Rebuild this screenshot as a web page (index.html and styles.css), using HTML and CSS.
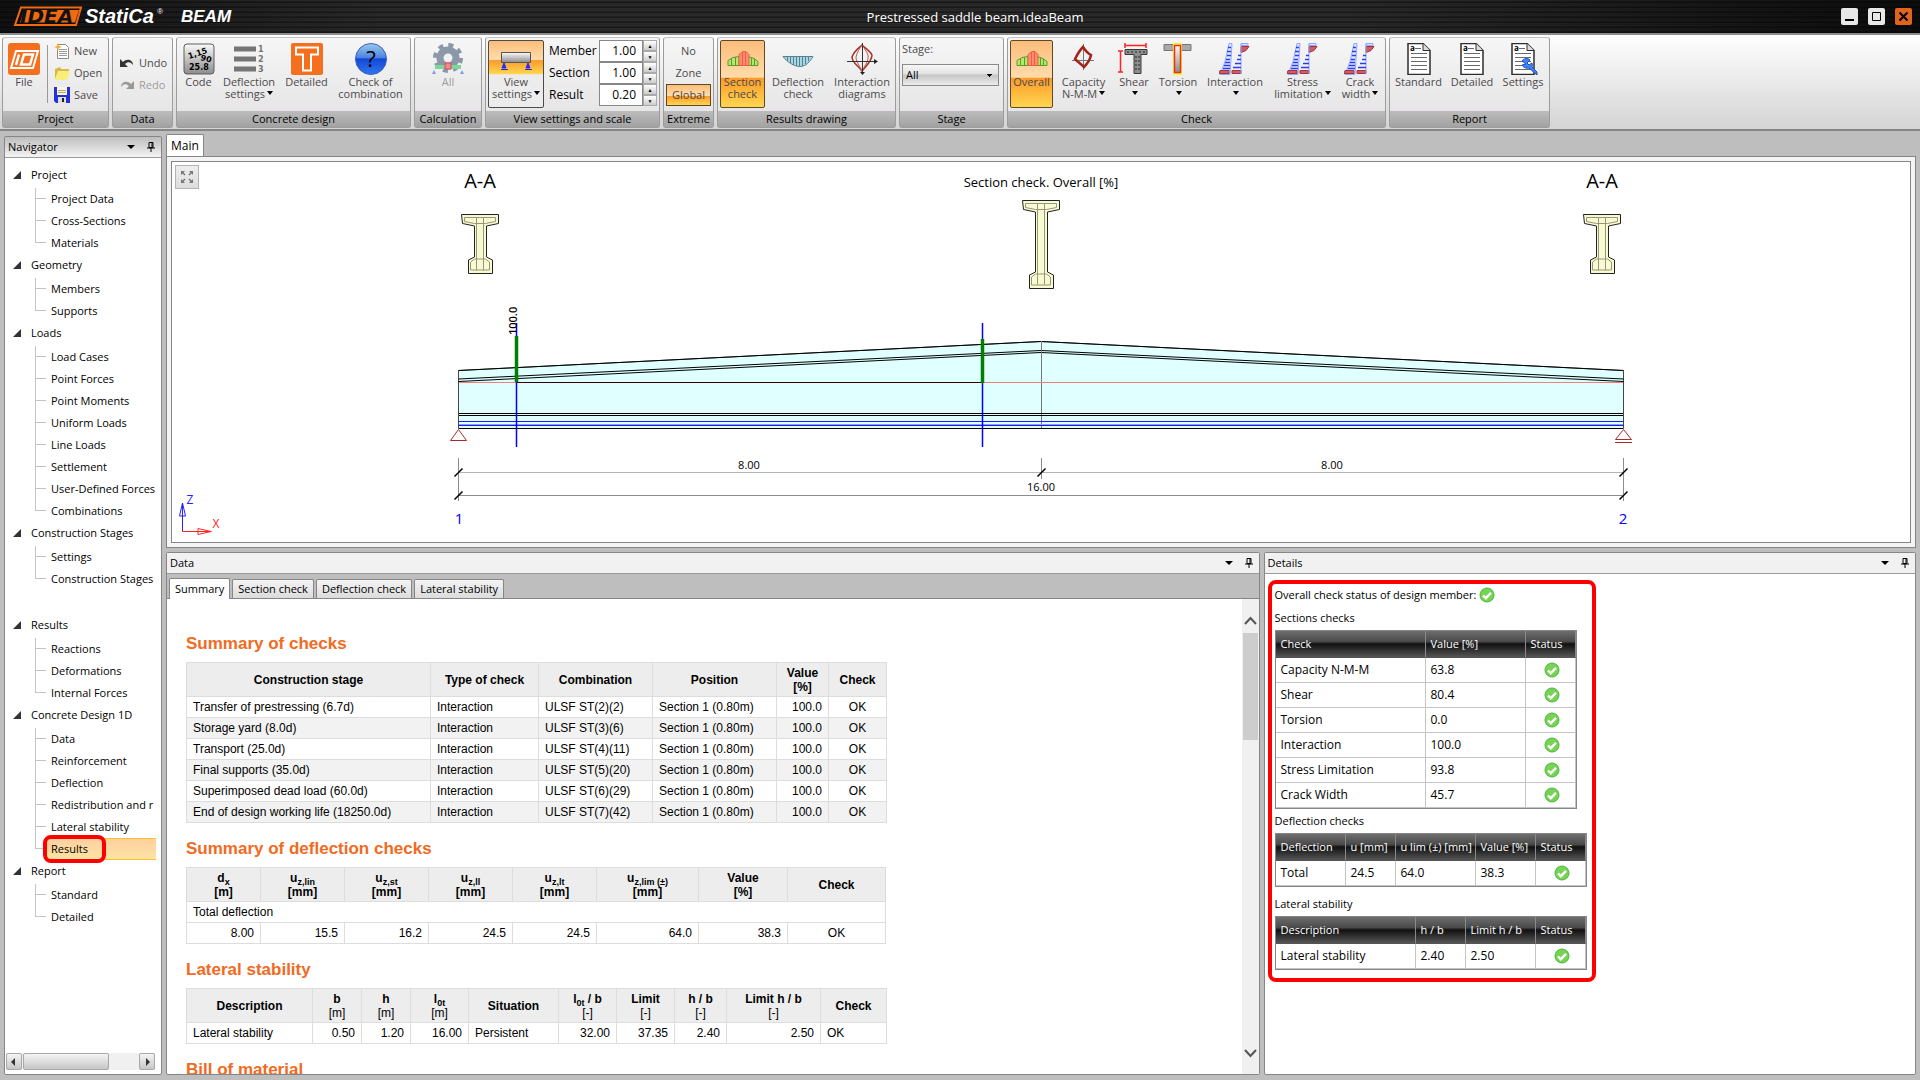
FILE: index.html
```html
<!DOCTYPE html>
<html lang="en">

<head>
    <meta charset="UTF-8">
    <meta name="viewport" content="width=device-width, initial-scale=1.0">
    <title>Prestressed saddle beam.ideaBeam</title>
    <link rel="stylesheet" href="styles.css">
</head>

<body>
    <!-- shared icons -->
    <svg class="defs" width="0" height="0">
        <defs>
            <linearGradient id="steel" x1="0" y1="0" x2="0" y2="1">
                <stop offset="0" stop-color="#fafafa" />
                <stop offset="1" stop-color="#8c8c8c" />
            </linearGradient>
            <linearGradient id="blueball" x1="0" y1="0" x2="0" y2="1">
                <stop offset="0" stop-color="#9ccbee" />
                <stop offset="0.45" stop-color="#4c86e0" />
                <stop offset="0.5" stop-color="#1546d4" />
                <stop offset="1" stop-color="#2f78f2" />
            </linearGradient>
        </defs>
        <symbol id="i-ok" viewBox="0 0 16 16">
            <circle cx="8" cy="8" r="7" fill="#77d353" stroke="#4db53c" />
            <path d="M4 8.500l2.800 2.700 5.200-5.400" fill="none" stroke="#fff" stroke-width="2.400" />
        </symbol>
        <symbol id="i-pin" viewBox="0 0 8 10">
            <path d="M2 .5h4v5H2zM0 6h8M4 6v4M5 1v5" fill="none" stroke="#000" />
        </symbol>
        <symbol id="i-overall" viewBox="0 0 32 32">
            <path d="M1 22.500v-5l5-3 6-1v9zM21 22.500v-9l6 2 4 3v4z" fill="#b5e86a" stroke="#5d9a2c" />
            <path d="M4.500 16v6M8.500 14v8M24.500 15v7M27.500 16v6" stroke="#5d9a2c" />
            <path d="M12 22.500v-11l4-3h3l3 3v11z" fill="#ff8d6c" stroke="#e8604a" />
            <path d="M15.500 9v13M18.500 9v13" stroke="#e8604a" />
        </symbol>
        <symbol id="i-stress" viewBox="0 0 32 32">
            <path d="M10 .5h3L11 31.500H1l5-13z" fill="#dfe6ff" stroke="#8ea6ff" />
            <path d="M9 4.500h3M8 8.500h4M8 12.500h4M7 16.500h4M6 19.500h5M5 22.500h6M4 25.500h7" stroke="#2a3df0" stroke-width="1.500" />
            <path d="M1 27.500h9v3H0zM13 27.500h9v3h-9zM22 3.500h8l-3 4-5 2z" fill="#c85f68" stroke="#a83340" />
            <path d="M22 .5h7v2h-7zM22 1v30" fill="#dfe6ff" stroke="#8ea6ff" />
            <path d="M19 12.500h3M18 16.500h4M16 20.500h6M14 24.500h8" stroke="#2a3df0" stroke-width="1.500" />
        </symbol>
        <symbol id="i-report" viewBox="0 0 32 32">
            <path d="M5 .5h15l7 7v24H5z" fill="#fff" stroke="#2e2e2e" stroke-width="1.500" />
            <path d="M20 .5v7h7" fill="#ddd" stroke="#2e2e2e" />
            <path d="M12 5.500h6M8 10.500h16M8 14.500h16M8 18.500h16M8 22.500h16M8 26.500h16" stroke="#6a6a6a" />
        </symbol>
    </svg>

    <header class="titlebar">
        <div class="brand">
            <svg class="logo" width="240" height="33">
                <path d="M21 7.500h60l-5 17.500H15z" fill="#0b0b0b" stroke="#f26a0f" stroke-width="2" />
                <path d="M24 10h55l-4 12.500H20z" fill="#f26a0f" />
                <text class="logo-idea" x="20" y="23">IDEA</text>
                <text class="logo-statica" x="85" y="23">StatiCa</text>
                <text class="logo-reg" x="157" y="14">®</text>
                <text class="logo-beam" x="181" y="22">BEAM</text>
            </svg>
        </div>
        <h1 class="title">Prestressed saddle beam.ideaBeam</h1>
        <div class="window-buttons">
            <button class="win" aria-label="Minimize"><svg width="17" height="17"><path d="M4 12h9" stroke="#000" stroke-width="2" /></svg></button>
            <button class="win" aria-label="Maximize"><svg width="17" height="17"><path d="M4.500 4.500h8v8h-8z" fill="none" stroke="#000" /></svg></button>
            <button class="win close" aria-label="Close"><svg width="17" height="17"><path d="M4.500 4.500l8 8M12.500 4.500l-8 8" stroke="#000" stroke-width="2" /></svg></button>
        </div>
    </header>

    <div class="ribbon">
        <section class="group">
            <div class="tools">
                <button class="tool w-file">
                    <svg width="32" height="32"><rect width="32" height="32" rx="3" fill="#f5701e" /><path d="M8 8h22l-5 17H3z" fill="none" stroke="#fff" stroke-width="2" /><path d="M11 11.500L8 22M16 11.500h9l-3 10h-9z" fill="none" stroke="#fff" stroke-width="2.500" /></svg>
                    <span>File</span>
                </button>
                <div class="divider"></div>
                <div class="stack">
                    <button class="small"><svg width="16" height="16"><path d="M3.500 1.500h8l3 3v11h-11z" fill="#fff" stroke="#8a8a8a" /><path d="M5 6.500h8M5 8.500h8M5 10.500h8M5 12.500h8" stroke="#9a9a9a" /><path d="M4 0l1 3 3 1-3 1-1 3-1-3-3-1 3-1z" fill="#f9ac3b" /></svg>New</button>
                    <button class="small"><svg width="16" height="16"><path d="M1 4l5-2 1 2h8v3H4l-3 7z" fill="#d9b84a" /><path d="M4 6h12l-3 9H1z" fill="#f8ee7a" /></svg>Open</button>
                    <button class="small"><svg width="16" height="16"><path d="M0 0h16v16H2l-2-2z" fill="#2430d8" /><path d="M3 0h10v8H3z" fill="#fbf6df" /><path d="M4 3.500h8M4 5.500h8" stroke="#b7a96e" /><path d="M4 10h8v6H4z" fill="#ddd" /><path d="M8 11h2v4H8z" fill="#222" /></svg>Save</button>
                </div>
            </div>
            <h2>Project</h2>
        </section>
        <section class="group">
            <div class="tools w-data">
                <div class="stack middle">
                    <button class="small"><svg width="16" height="16"><path d="M1 4v8h8l-3-3c3-3 6-2 8 1 0-5-6-7-10-3z" fill="#333" /></svg>Undo</button>
                    <button class="small off"><svg width="16" height="16"><path d="M15 4v8H7l3-3C7 6 4 7 2 10 2 5 8 3 12 7z" fill="#999" /></svg>Redo</button>
                </div>
            </div>
            <h2>Data</h2>
        </section>
        <section class="group">
            <div class="tools">
                <button class="tool w-code">
                    <svg width="32" height="32" class="code-icon"><rect x="1" y="1" width="30" height="30" rx="3" fill="url(#steel)" stroke="#5c5c5c" /><text x="6" y="16" transform="rotate(-18 6 16)">1,15</text><text x="17" y="17" transform="rotate(14 17 17)">90</text><text x="6" y="27">25.8</text></svg>
                    <span>Code</span>
                </button>
                <button class="tool w-deflection">
                    <svg width="32" height="32" class="lines-icon"><path d="M1 6h22M1 16h22M1 26h22" stroke="#757575" stroke-width="5" /><text x="25" y="9">1</text><text x="25" y="19">2</text><text x="25" y="29">3</text></svg>
                    <span>Deflection<br>settings<i class="caret"></i></span>
                </button>
                <button class="tool w-detailed">
                    <svg width="32" height="32"><rect width="32" height="32" rx="2" fill="#f5701e" /><path d="M5 4.500h22v7h-7v16h-8v-16H5z" fill="none" stroke="#fff" stroke-width="2" /></svg>
                    <span>Detailed</span>
                </button>
                <button class="tool w-combination">
                    <svg width="32" height="32" class="help-icon"><circle cx="16" cy="16" r="15.500" fill="url(#blueball)" stroke="#3a5fc0" /><text x="16" y="24" text-anchor="middle">?</text></svg>
                    <span>Check of<br>combination</span>
                </button>
            </div>
            <h2>Concrete design</h2>
        </section>
        <section class="group">
            <div class="tools">
                <button class="tool off w-all">
                    <svg width="32" height="32"><circle cx="16" cy="15" r="8" fill="none" stroke="#8c97a8" stroke-width="7" /><circle cx="16" cy="15" r="13" fill="none" stroke="#8c97a8" stroke-width="4" stroke-dasharray="5 5.200" /><path d="M3 24h26" stroke="#79d79a" stroke-width="4" /><path d="M13 20h6v6h-6z" fill="#f08a8a" stroke="#d46" /><path d="M2 27l-2 4h4zM30 27l-2 4h4z" fill="#8f95f0" /></svg>
                    <span>All</span>
                </button>
            </div>
            <h2>Calculation</h2>
        </section>
        <section class="group">
            <div class="tools">
                <button class="tool w-view half-pressed">
                    <svg width="32" height="32"><path d="M1.500 9.500h29v10h-29z" fill="url(#steel)" stroke="#555" /><path d="M4 20l-2 5h4zM28 20l-2 5h4zM1 26.500h7M25 26.500h7" fill="#2a2af0" stroke="#2a2af0" /></svg>
                    <span>View<br>settings<i class="caret"></i></span>
                </button>
                <div class="scales">
                    <label for="member">Member</label>
                    <div class="spin"><input id="member" type="text" value="1.00"><div class="updown"><button aria-label="Increase member">▲</button><button aria-label="Decrease member">▼</button></div></div>
                    <label for="section">Section</label>
                    <div class="spin"><input id="section" type="text" value="1.00"><div class="updown"><button aria-label="Increase section">▲</button><button aria-label="Decrease section">▼</button></div></div>
                    <label for="result">Result</label>
                    <div class="spin"><input id="result" type="text" value="0.20"><div class="updown"><button aria-label="Increase result">▲</button><button aria-label="Decrease result">▼</button></div></div>
                </div>
            </div>
            <h2>View settings and scale</h2>
        </section>
        <section class="group">
            <div class="tools">
                <div class="stack extreme">
                    <button class="small">No</button>
                    <button class="small">Zone</button>
                    <button class="small pressed">Global</button>
                </div>
            </div>
            <h2>Extreme</h2>
        </section>
        <section class="group">
            <div class="tools">
                <button class="tool w-section pressed"><svg width="32" height="32"><use href="#i-overall" /></svg><span>Section<br>check</span></button>
                <button class="tool w-dcheck">
                    <svg width="32" height="32"><path d="M1 13.500h30c-3 5-7 10-13 10S5 19 1 13.500z" fill="#a5d7e6" stroke="#5b7f8c" /><path d="M5.500 14v4M8.500 14v6M11.500 14v8M14.500 14v9M17.500 14v9M20.500 14v9M23.500 14v7M26.500 14v4" stroke="#5b7f8c" /></svg>
                    <span>Deflection<br>check</span>
                </button>
                <button class="tool w-diagrams">
                    <svg width="32" height="32"><path d="M16 2c3 3 8 6 10 10 0 6-5 10-10 16C12 22 6 20 6 14c2-6 7-9 10-12z" fill="none" stroke="#a53028" stroke-width="1.500" /><path d="M16 2c2 3 5 7 6 10 1 6-3 10-6 16-3-6-6-10-6-14 1-5 4-9 6-12z" fill="none" stroke="#c0584e" /><path d="M16.500 0v31M1 18.500h30" stroke="#333" /><path d="M28 16l4 2.500-4 2.500zM14 29h5l-2.500 3z" fill="#222" /></svg>
                    <span>Interaction<br>diagrams</span>
                </button>
            </div>
            <h2>Results drawing</h2>
        </section>
        <section class="group">
            <div class="tools w-stage">
                <div class="stage">
                    <label for="stage">Stage:</label>
                    <select id="stage"><option>All</option></select>
                </div>
            </div>
            <h2>Stage</h2>
        </section>
        <section class="group">
            <div class="tools">
                <button class="tool w-overall pressed"><svg width="32" height="32"><use href="#i-overall" /></svg><span>Overall</span></button>
                <button class="tool w-capacity">
                    <svg width="32" height="32"><path d="M15.500 1v26M4 17.500h22" stroke="#777" /><path d="M15 4c2 3 4 6 8 8-1 5-3 8-7 12-3-3-6-5-9-8 2-4 4-8 8-12z" fill="none" stroke="#a5231a" stroke-width="2.500" /></svg>
                    <span>Capacity<br>N-M-M<i class="caret"></i></span>
                </button>
                <button class="tool w-shear">
                    <svg width="32" height="32"><path d="M7 6.500h22v5h-6v19h-7v-19H7z" fill="#8e8e8e" stroke="#3c3c3c" /><path d="M9 9h18M18 13v15M21 13v15" stroke="#222" stroke-dasharray="2 2" /><path d="M7 2.500h21M2.500 8v21M7 0v5M28 0v5M0 8h5M0 29h5" stroke="#f22" stroke-width="1.500" /></svg>
                    <span>Shear<br><i class="caret"></i></span>
                </button>
                <button class="tool w-torsion">
                    <svg width="32" height="32"><path d="M2 1.500h27v6H2z" fill="#a9a9a9" stroke="#777" /><path d="M11 0h9v32h-9z" fill="#ffee3c" /><path d="M12.500 2.500h6v27h-6z" fill="url(#steel)" stroke="#f03010" stroke-width="1.500" /></svg>
                    <span>Torsion<br><i class="caret"></i></span>
                </button>
                <button class="tool w-interaction"><svg width="32" height="32"><use href="#i-stress" /></svg><span>Interaction<br><i class="caret"></i></span></button>
                <button class="tool w-stress"><svg width="32" height="32"><use href="#i-stress" /></svg><span>Stress<br>limitation<i class="caret"></i></span></button>
                <button class="tool w-crack"><svg width="32" height="32"><use href="#i-stress" /></svg><span>Crack<br>width<i class="caret"></i></span></button>
            </div>
            <h2>Check</h2>
        </section>
        <section class="group">
            <div class="tools">
                <button class="tool w-standard"><svg class="page-icon" width="32" height="32"><use href="#i-report" /><text x="7" y="8">a</text></svg><span>Standard</span></button>
                <button class="tool w-report"><svg class="page-icon" width="32" height="32"><use href="#i-report" /><text x="7" y="8">a</text></svg><span>Detailed</span></button>
                <button class="tool w-settings"><svg class="page-icon" width="32" height="32"><use href="#i-report" /><text x="7" y="8">a</text><path d="M15 18c2-3 6-3 8-1l-3 3 2 2 3-2c1 2 0 3 0 4l5 5v3l-8-7c-3 1-6-1-7-3l4-1z" fill="#3f83ff" stroke="#1c50b8" /></svg><span>Settings</span></button>
            </div>
            <h2>Report</h2>
        </section>
    </div>

    <main class="workspace">
        <aside class="panel navigator">
            <div class="panel-head shaded"><span>Navigator</span><i class="caret"></i><svg width="8" height="10"><use href="#i-pin" /></svg></div>
            <nav class="tree">
                <h3>Project</h3>
                <ul>
                    <li><a href="#">Project Data</a></li>
                    <li><a href="#">Cross-Sections</a></li>
                    <li><a href="#">Materials</a></li>
                </ul>
                <h3>Geometry</h3>
                <ul>
                    <li><a href="#">Members</a></li>
                    <li><a href="#">Supports</a></li>
                </ul>
                <h3>Loads</h3>
                <ul>
                    <li><a href="#">Load Cases</a></li>
                    <li><a href="#">Point Forces</a></li>
                    <li><a href="#">Point Moments</a></li>
                    <li><a href="#">Uniform Loads</a></li>
                    <li><a href="#">Line Loads</a></li>
                    <li><a href="#">Settlement</a></li>
                    <li><a href="#">User-Defined Forces</a></li>
                    <li><a href="#">Combinations</a></li>
                </ul>
                <h3>Construction Stages</h3>
                <ul class="spaced">
                    <li><a href="#">Settings</a></li>
                    <li><a href="#">Construction Stages</a></li>
                </ul>
                <h3>Results</h3>
                <ul>
                    <li><a href="#">Reactions</a></li>
                    <li><a href="#">Deformations</a></li>
                    <li><a href="#">Internal Forces</a></li>
                </ul>
                <h3>Concrete Design 1D</h3>
                <ul>
                    <li><a href="#">Data</a></li>
                    <li><a href="#">Reinforcement</a></li>
                    <li><a href="#">Deflection</a></li>
                    <li><a href="#">Redistribution and r</a></li>
                    <li><a href="#">Lateral stability</a></li>
                    <li class="selected"><a href="#">Results</a></li>
                </ul>
                <h3>Report</h3>
                <ul>
                    <li><a href="#">Standard</a></li>
                    <li><a href="#">Detailed</a></li>
                </ul>
            </nav>
            <div class="hscroll">
                <button aria-label="Scroll left"><svg width="14" height="14"><path d="M8 3v8L4 7z" fill="#333" /></svg></button>
                <div class="hthumb"></div>
                <button aria-label="Scroll right"><svg width="14" height="14"><path d="M6 3v8l4-4z" fill="#333" /></svg></button>
            </div>
        </aside>

        <div class="right">
            <div class="main-tabs"><button class="main-tab">Main</button></div>
            <section class="canvas">
                <button class="fit" aria-label="Zoom to fit"><svg width="22" height="22"><path d="M6 6l3 3M16 6l-3 3M6 16l3-3M16 16l-3-3" stroke="#777" stroke-width="1.500" /><path d="M5 5h4l-4 4zM17 5v4l-4-4zM5 17v-4l4 4zM17 17h-4l4-4z" fill="#777" /></svg></button>
                <svg class="drawing" height="380" viewBox="172 162 1738 380">
                    <defs>
                        <g id="sec-end" stroke="#222">
                            <path d="M-18.500 .5h37v9l-12 2.500v31l6 3v13.500h-24v-13.500l6-3v-31l-12-2.500z" fill="#fafad2" />
                            <path d="M-15.500 3.500h31v4l-10 2h-11l-10-2zM-3.500 3.500v53M3.500 3.500v53M-9.500 48l4-3h11l4 3v8h-19z" fill="none" stroke="#96967c" />
                        </g>
                        <g id="sec-mid" stroke="#222">
                            <path d="M-18.500 .5h37v9l-12 2.500v60l6 3v13.500h-24v-13.500l6-3v-60l-12-2.500z" fill="#fafad2" />
                            <path d="M-15.500 3.500h31v4l-10 2h-11l-10-2zM-3.500 3.500v81M3.500 3.500v81M-9.500 77l4-3h11l4 3v8h-19z" fill="none" stroke="#96967c" />
                        </g>
                    </defs>
                    <text class="t-big" x="480" y="188">A-A</text>
                    <text class="t-title" x="1041" y="187">Section check. Overall [%]</text>
                    <text class="t-big" x="1602" y="188">A-A</text>
                    <use href="#sec-end" x="480" y="214" />
                    <use href="#sec-mid" x="1041" y="200" />
                    <use href="#sec-end" x="1602" y="214" />

                    <!-- beam -->
                    <path d="M458.500 370.500L1041 341.500l582.500 29v58h-1165z" fill="#e0ffff" stroke="#444" />
                    <path d="M458.500 370.500L1041 341.500l582.500 29" fill="none" stroke="#000" />
                    <path d="M458.500 379L1041 350.500l582.500 28.500M458.500 381.500L1041 352.500l582.500 29" fill="none" stroke="#000" />
                    <path d="M1041.500 341v87" stroke="#777" />
                    <path d="M459 382.500h1164" stroke="#f08080" />
                    <path d="M517 382.500h466" stroke="#300" />
                    <path d="M459 413.500h1164M459 415.500h1164M459 428.500h1164" stroke="#000" />
                    <path d="M459 421.500h1164M459 425.500h1164" stroke="#1a1aff" />
                    <path d="M459 424.500h1164" stroke="#8f9cff" />
                    <path d="M516.500 323v124M982.500 323v124" stroke="#00f" stroke-width="1.500" />
                    <path d="M516.500 336v46M982.500 339v44" stroke="#008000" stroke-width="3.500" />
                    <path d="M458.500 429.500l8 11h-16zM1623.500 429.500l8 10h-16zM1615 442.500h17" fill="none" stroke="#a52a2a" />
                    <text class="t-val" transform="translate(517 335) rotate(-90)">100.0</text>

                    <!-- dimensions -->
                    <path d="M458.500 458v43M1041.500 458v21M1623.500 458v43M458 495.500h1166" stroke="#8c8c8c" />
                    <path d="M458 472.500h1166" stroke="#b4b4b4" />
                    <path d="M454.500 476.500l8-8M454.500 499.500l8-8M1037.500 476.500l8-8M1619.500 476.500l8-8M1619.500 499.500l8-8" stroke="#000" stroke-width="1.500" />
                    <text class="t-dim" x="749" y="469">8.00</text>
                    <text class="t-dim" x="1332" y="469">8.00</text>
                    <text class="t-dim" x="1041" y="491">16.00</text>
                    <text class="t-node" x="459" y="524">1</text>
                    <text class="t-node" x="1623" y="524">2</text>

                    <!-- axes -->
                    <path d="M182.500 531.500V503M179.500 516l3-13 3 13z" fill="none" stroke="#22f" />
                    <path d="M182.500 531.500h29M198 528.500l13 3-13 3z" fill="none" stroke="#f22" />
                    <text class="t-axis z" x="190" y="504">Z</text>
                    <text class="t-axis x" x="216" y="528">X</text>
                </svg>
            </section>

            <div class="bottom">
                <section class="panel data">
                    <div class="panel-head"><span>Data</span><i class="caret"></i><svg width="8" height="10"><use href="#i-pin" /></svg></div>
                    <div class="tabs">
                        <button class="tab active">Summary</button>
                        <button class="tab">Section check</button>
                        <button class="tab">Deflection check</button>
                        <button class="tab">Lateral stability</button>
                    </div>
                    <div class="data-body">
                        <div class="report">
                            <h2>Summary of checks</h2>
                            <table>
                                <colgroup><col class="c-244"><col class="c-108"><col class="c-114"><col class="c-124"><col class="c-52"><col class="c-58"></colgroup>
                                <tr><th>Construction stage</th><th>Type of check</th><th>Combination</th><th>Position</th><th>Value<br>[%]</th><th>Check</th></tr>
                                <tr><td>Transfer of prestressing (6.7d)</td><td>Interaction</td><td>ULSF ST(2)(2)</td><td>Section 1 (0.80m)</td><td class="num">100.0</td><td class="mid">OK</td></tr>
                                <tr class="alt"><td>Storage yard (8.0d)</td><td>Interaction</td><td>ULSF ST(3)(6)</td><td>Section 1 (0.80m)</td><td class="num">100.0</td><td class="mid">OK</td></tr>
                                <tr><td>Transport (25.0d)</td><td>Interaction</td><td>ULSF ST(4)(11)</td><td>Section 1 (0.80m)</td><td class="num">100.0</td><td class="mid">OK</td></tr>
                                <tr class="alt"><td>Final supports (35.0d)</td><td>Interaction</td><td>ULSF ST(5)(20)</td><td>Section 1 (0.80m)</td><td class="num">100.0</td><td class="mid">OK</td></tr>
                                <tr><td>Superimposed dead load (60.0d)</td><td>Interaction</td><td>ULSF ST(6)(29)</td><td>Section 1 (0.80m)</td><td class="num">100.0</td><td class="mid">OK</td></tr>
                                <tr class="alt"><td>End of design working life (18250.0d)</td><td>Interaction</td><td>ULSF ST(7)(42)</td><td>Section 1 (0.80m)</td><td class="num">100.0</td><td class="mid">OK</td></tr>
                            </table>
                            <h2>Summary of deflection checks</h2>
                            <table>
                                <colgroup><col class="c-74"><col class="c-84"><col class="c-84"><col class="c-84"><col class="c-84"><col class="c-102"><col class="c-89"><col class="c-98"></colgroup>
                                <tr><th>d<sub>x</sub><br>[m]</th><th>u<sub>z,lin</sub><br>[mm]</th><th>u<sub>z,st</sub><br>[mm]</th><th>u<sub>z,ll</sub><br>[mm]</th><th>u<sub>z,lt</sub><br>[mm]</th><th>u<sub>z,lim (±)</sub><br>[mm]</th><th>Value<br>[%]</th><th>Check</th></tr>
                                <tr><td colspan="8">Total deflection</td></tr>
                                <tr class="num"><td>8.00</td><td>15.5</td><td>16.2</td><td>24.5</td><td>24.5</td><td>64.0</td><td>38.3</td><td class="mid">OK</td></tr>
                            </table>
                            <h2>Lateral stability</h2>
                            <table>
                                <colgroup><col class="c-126"><col class="c-49"><col class="c-49"><col class="c-58"><col class="c-90"><col class="c-58"><col class="c-58"><col class="c-52"><col class="c-94"><col class="c-66"></colgroup>
                                <tr><th>Description</th><th>b<br><small>[m]</small></th><th>h<br><small>[m]</small></th><th>l<sub>0t</sub><br><small>[m]</small></th><th>Situation</th><th>l<sub>0t</sub> / b<br><small>[-]</small></th><th>Limit<br><small>[-]</small></th><th>h / b<br><small>[-]</small></th><th>Limit h / b<br><small>[-]</small></th><th>Check</th></tr>
                                <tr><td>Lateral stability</td><td class="num">0.50</td><td class="num">1.20</td><td class="num">16.00</td><td>Persistent</td><td class="num">32.00</td><td class="num">37.35</td><td class="num">2.40</td><td class="num">2.50</td><td>OK</td></tr>
                            </table>
                            <h2>Bill of material</h2>
                        </div>
                        <div class="vscroll">
                            <button aria-label="Scroll up"><svg width="15" height="14"><path d="M2 11l5.500-6 5.500 6" fill="none" stroke="#555" stroke-width="2" /></svg></button>
                            <div class="vthumb"></div>
                            <button aria-label="Scroll down"><svg width="15" height="14"><path d="M2 4l5.500 6L13 4" fill="none" stroke="#555" stroke-width="2" /></svg></button>
                        </div>
                    </div>
                </section>

                <section class="panel details">
                    <div class="panel-head"><span>Details</span><i class="caret"></i><svg width="8" height="10"><use href="#i-pin" /></svg></div>
                    <div class="highlight">
                        <p>Overall check status of design member: <svg width="16" height="16"><use href="#i-ok" /></svg></p>
                        <h3>Sections checks</h3>
                        <table class="grid">
                            <colgroup><col class="c-150"><col class="c-100"><col class="c-50"></colgroup>
                            <tr><th>Check</th><th>Value [%]</th><th>Status</th></tr>
                            <tr><td>Capacity N-M-M</td><td>63.8</td><td class="st"><svg width="16" height="16"><use href="#i-ok" /></svg></td></tr>
                            <tr><td>Shear</td><td>80.4</td><td class="st"><svg width="16" height="16"><use href="#i-ok" /></svg></td></tr>
                            <tr><td>Torsion</td><td>0.0</td><td class="st"><svg width="16" height="16"><use href="#i-ok" /></svg></td></tr>
                            <tr><td>Interaction</td><td>100.0</td><td class="st"><svg width="16" height="16"><use href="#i-ok" /></svg></td></tr>
                            <tr><td>Stress Limitation</td><td>93.8</td><td class="st"><svg width="16" height="16"><use href="#i-ok" /></svg></td></tr>
                            <tr><td>Crack Width</td><td>45.7</td><td class="st"><svg width="16" height="16"><use href="#i-ok" /></svg></td></tr>
                        </table>
                        <h3>Deflection checks</h3>
                        <table class="grid">
                            <colgroup><col class="c-70"><col class="c-50"><col class="c-80"><col class="c-60"><col class="c-50"></colgroup>
                            <tr><th>Deflection</th><th>u [mm]</th><th>u lim (±) [mm]</th><th>Value [%]</th><th>Status</th></tr>
                            <tr><td>Total</td><td>24.5</td><td>64.0</td><td>38.3</td><td class="st"><svg width="16" height="16"><use href="#i-ok" /></svg></td></tr>
                        </table>
                        <h3 class="last">Lateral stability</h3>
                        <table class="grid">
                            <colgroup><col class="c-140"><col class="c-50"><col class="c-70"><col class="c-50"></colgroup>
                            <tr><th>Description</th><th>h / b</th><th>Limit h / b</th><th>Status</th></tr>
                            <tr><td>Lateral stability</td><td>2.40</td><td>2.50</td><td class="st"><svg width="16" height="16"><use href="#i-ok" /></svg></td></tr>
                        </table>
                    </div>
                </section>
            </div>
        </div>
    </main>
</body>

</html>
```

FILE: styles.css
```css
*,
*::before,
*::after {
    padding: 0;
    margin: 0;
    box-sizing: border-box;
}

body {
    display: flex;
    flex-direction: column;
    height: 100vh;
    overflow: hidden;
    background-color: #bebebe;
    font-family: "Open Sans", "Noto Sans", sans-serif;
    font-size: 11px;
    line-height: 16px;
    color: #000;
}

button,
input,
select {
    font: inherit;
    color: inherit;
    background: none;
    border: 0;
}

h1,
h2,
h3 {
    font-size: 11px;
    font-weight: normal;
}

svg {
    display: block;
    flex: none;
}

.defs {
    position: absolute;
}

/* title bar */
.titlebar {
    display: flex;
    justify-content: space-between;
    align-items: center;
    height: 33px;
    flex: none;
    padding-right: 8px;
    color: #fff;
    background:
        linear-gradient(90deg, rgba(0, 0, 0, .6), transparent 20%, transparent 70%, rgba(0, 0, 0, .7)),
        repeating-linear-gradient(180deg, #2c2c2c 0, #2c2c2c 1px, #121212 2px, #1f1f1f 3px, #343434 4px, #161616 5px);
}

.brand {
    flex: 1 1 38px;
}

.logo {
    font-family: "Liberation Sans", sans-serif;
    font-weight: bold;
    font-style: italic;
    fill: #fff;
}

.logo-idea {
    font-family: "DejaVu Sans", sans-serif;
    font-size: 20px;
    fill: #111;
}

.logo-statica {
    font-size: 20px;
}

.logo-reg {
    font-size: 8px;
    font-weight: normal;
}

.logo-beam {
    font-size: 17px;
}

.title {
    flex: none;
    font-size: 13px;
}

.window-buttons {
    display: flex;
    flex: 1 1 0;
    justify-content: flex-end;
    gap: 10px;
}

.win {
    width: 17px;
    height: 17px;
    border-radius: 2px;
    background-color: #e8e8e8;
}

.close {
    background-color: #e0641f;
}

/* ribbon */
.ribbon {
    display: flex;
    gap: 3px;
    flex: none;
    height: 98px;
    padding: 2px;
    border-top: 2px solid #8c8c8c;
    border-bottom: 2px solid #868686;
    background-image: linear-gradient(#fff, #d4d4d4);
}

.group {
    display: flex;
    flex-direction: column;
    height: 91px;
    border: 1px solid #9c9c9c;
    border-top-color: #c4c4c4;
    border-radius: 3px;
    background-image: linear-gradient(#f6f6f6, #e4e2e4);
}

.group h2 {
    height: 16px;
    line-height: 16px;
    text-align: center;
    background-image: linear-gradient(#bcbcbc, #a2a2a2);
}

.tools {
    display: flex;
    flex: 1;
    padding: 2px 2px 0;
}

.tool {
    display: flex;
    flex-direction: column;
    align-items: center;
    height: 68px;
    padding-top: 2px;
    border: 1px solid transparent;
    border-radius: 2px;
    color: #4a4a4a;
    line-height: 12px;
    white-space: nowrap;
}

.tool span {
    margin-top: 1px;
}

.off {
    color: #9c9c9c;
}

.pressed {
    border: 1px solid #5e4a28;
    background-image: linear-gradient(#fdbd79, #ffdcab 55%, #fd9a2b 56%, #ffd650);
}

.half-pressed {
    border-color: #4c4c4c;
    background-image: linear-gradient(#fdbd79, #ffdcab 28%, #fd9a2b 29%, #ffd650 50%, #ececec 51%);
}

.caret {
    display: inline-block;
    border: 3px solid transparent;
    border-top: 4px solid #000;
    border-bottom: 0;
    margin: 0 0 3px 2px;
}

.w-file { width: 38px; }
.w-data { width: 59px; }
.w-code { width: 39px; }
.w-deflection { width: 62px; }
.w-detailed { width: 53px; }
.w-combination { width: 75px; }
.w-all { width: 62px; }
.w-view { width: 56px; }
.w-section { width: 45px; }
.w-dcheck { width: 66px; }
.w-diagrams { width: 62px; }
.w-stage { width: 103px; }
.w-overall { width: 43px; }
.w-capacity { width: 61px; }
.w-shear { width: 40px; }
.w-torsion { width: 48px; }
.w-interaction { width: 66px; }
.w-stress { width: 69px; }
.w-crack { width: 46px; }
.w-standard { width: 53px; }
.w-report { width: 54px; }
.w-settings { width: 48px; }

.divider {
    width: 1px;
    height: 58px;
    margin: 5px 6px 0 4px;
    background-color: #999;
}

.stack {
    display: flex;
    flex-direction: column;
}

.stack.middle {
    padding: 12px 0 0 4px;
}

.small {
    display: flex;
    align-items: center;
    gap: 4px;
    width: 52px;
    height: 22px;
    color: #4a4a4a;
}

.small.off {
    color: #9c9c9c;
}

.extreme .small {
    width: 45px;
    justify-content: center;
}

.code-icon,
.lines-icon {
    font-family: "DejaVu Sans", sans-serif;
    font-size: 8px;
    font-weight: bold;
}

.lines-icon text {
    fill: #757575;
}

.help-icon {
    font-size: 22px;
}

.page-icon {
    font-size: 8px;
    font-weight: bold;
}

.scales {
    display: grid;
    grid-template-columns: 50px 58px;
    grid-auto-rows: 22px;
    align-items: center;
    padding-left: 5px;
    font-size: 12px;
}

.spin {
    display: flex;
    height: 22px;
}

.spin input {
    width: 44px;
    padding-right: 6px;
    border: 1px solid #888;
    background-color: #fff;
    text-align: right;
}

.updown {
    display: flex;
    flex-direction: column;
    width: 14px;
}

.updown button {
    flex: 1;
    border: 1px solid #aaa;
    background-image: linear-gradient(#fff, #ccc);
    font-size: 5px;
    line-height: 8px;
}

.stage {
    flex: 1;
}

.stage label {
    display: block;
    margin: 1px 0 7px;
    color: #4a4a4a;
}

.stage select {
    appearance: none;
    display: block;
    width: 97px;
    height: 22px;
    padding-left: 3px;
    border: 1px solid #8a8a8a;
    background:
        linear-gradient(#000, #000) right 6px top 9px / 5px 1px no-repeat,
        linear-gradient(#000, #000) right 7px top 10px / 3px 1px no-repeat,
        linear-gradient(#000, #000) right 8px top 11px / 1px 1px no-repeat,
        linear-gradient(#f6f6f6, #e2e2e2 45%, #c4c4c4 50%, #ececec);
}

/* workspace */
.workspace {
    display: flex;
    flex: 1;
    min-height: 0;
    gap: 4px;
    padding: 3px 4px 5px;
}

.panel {
    display: flex;
    flex-direction: column;
    border: 1px solid #868686;
    border-radius: 2px;
    background-color: #fff;
}

.panel-head {
    display: flex;
    align-items: center;
    flex: none;
    height: 21px;
    padding: 0 6px 0 3px;
    border-bottom: 1px solid #9a9a9a;
    background-color: #f1f1f1;
}

.panel-head span {
    flex: 1;
}

.panel-head .caret {
    border-width: 4px 4px 0;
    margin: 0 12px 0 0;
}

.shaded {
    background-image: linear-gradient(#bdbdbd, #f4f4f4);
}

.navigator {
    width: 158px;
    flex: none;
    margin-top: 2px;
}

.tree {
    flex: 1;
    margin: 6px 5px 0 0;
    overflow: hidden;
}

.tree h3 {
    display: flex;
    align-items: center;
    gap: 10px;
    height: 24px;
    padding: 0 0 2px 8px;
    white-space: nowrap;
}

.tree h3::before {
    content: "";
    border: 4px solid #333;
    border-top-color: transparent;
    border-left-color: transparent;
}

.tree ul {
    list-style: none;
    padding-left: 30px;
}

.tree .spaced {
    padding-bottom: 24px;
}

.tree li {
    display: flex;
    height: 22px;
    line-height: 22px;
    white-space: nowrap;
    /* vertical and horizontal guide lines */
    background:
        linear-gradient(#c4c4c4, #c4c4c4) 0 0 / 1px 100% no-repeat,
        linear-gradient(#c4c4c4, #c4c4c4) 0 10px / 11px 1px no-repeat;
}

.tree li:last-child {
    background:
        linear-gradient(#c4c4c4, #c4c4c4) 0 0 / 1px 10px no-repeat,
        linear-gradient(#c4c4c4, #c4c4c4) 0 10px / 11px 1px no-repeat;
}

.tree a {
    flex: 1;
    margin-left: 11px;
    padding-left: 5px;
    color: #000;
    text-decoration: none;
}

.selected {
    position: relative;
}

.selected a {
    border-top: 1px solid #fcc22e;
    border-bottom: 1px solid #fcc22e;
    line-height: 20px;
    background-image: linear-gradient(#ffd0a0, #fbe4a2);
}

.selected::after {
    content: "";
    position: absolute;
    left: 8px;
    top: -3px;
    width: 63px;
    height: 28px;
    border: 4px solid #f00;
    border-radius: 8px;
}

.hscroll {
    display: flex;
    gap: 1px;
    height: 17px;
    margin: 0 6px 4px 1px;
    background-color: #f0f0f0;
}

.hscroll button,
.hthumb {
    display: flex;
    align-items: center;
    justify-content: center;
    width: 16px;
    border: 1px solid #a8a8a8;
    border-radius: 2px;
    background-image: linear-gradient(#f4f4f4, #c6c6c6);
}

.hscroll .hthumb {
    width: 86px;
}

.hscroll button:last-child {
    margin-left: auto;
}

.right {
    display: flex;
    flex-direction: column;
    flex: 1;
    min-width: 0;
}

.main-tabs {
    height: 22px;
    flex: none;
}

.main-tab {
    height: 23px;
    width: 38px;
    border: 1px solid #868686;
    border-bottom: 0;
    border-radius: 2px 2px 0 0;
    background-color: #fff;
    font-size: 12px;
}

.canvas {
    position: relative;
    flex: none;
    padding: 4px;
    border: 1px solid #868686;
    background-color: #f4f4f4;
}

.drawing {
    width: calc(100% - 2px);
    border: 1px solid #868686;
    box-sizing: content-box;
    background-color: #fff;
    text-anchor: middle;
}

.fit {
    position: absolute;
    left: 8px;
    top: 8px;
    width: 24px;
    height: 24px;
    border: 1px solid #b4b4b4;
    background-image: linear-gradient(#eee, #ddd);
}

.t-big {
    font-size: 20px;
}

.t-title {
    font-size: 13px;
}

.t-val,
.t-dim {
    font-size: 11px;
}

.t-val {
    font-weight: 600;
    text-anchor: start;
}

.t-node {
    font-size: 15px;
    fill: #00f;
}

.t-axis {
    font-size: 12px;
}

.z {
    fill: #22f;
}

.x {
    fill: #f22;
}

.bottom {
    display: flex;
    flex: 1;
    gap: 4px;
    min-height: 0;
    margin-top: 4px;
}

.data {
    flex: 1094;
    min-width: 0;
}

.details {
    flex: 652;
    min-width: 0;
}

.tabs {
    display: flex;
    align-items: flex-end;
    gap: 2px;
    height: 25px;
    flex: none;
    padding-left: 2px;
    border-bottom: 1px solid #868686;
    background-color: #bebebe;
}

.tab {
    height: 19px;
    padding: 0 5px;
    border: 1px solid #868686;
    border-bottom: 0;
    border-radius: 2px 2px 0 0;
    background-image: linear-gradient(#f4f4f4, #dcdcdc);
}

.tab.active {
    height: 21px;
    margin-bottom: -1px;
    background: #fff;
}

.data-body {
    display: flex;
    flex: 1;
    min-height: 0;
}

/* report page inside the data panel */
.report {
    flex: 1;
    overflow: hidden;
    padding: 35px 0 0 19px;
    font-family: "Liberation Sans", Arial, sans-serif;
    font-size: 12px;
    line-height: 14px;
}

.report h2 {
    margin: 0 0 8px;
    font-size: 17px;
    font-weight: bold;
    line-height: 20px;
    color: #f26a21;
}

.report table + h2 {
    margin-top: 16px;
}

.report table {
    table-layout: fixed;
    width: 700px;
    border-collapse: collapse;
    border: 1px solid #c8c8c8;
}

.report th,
.report td {
    padding: 3px 6px;
    border: 1px solid #ddd;
    text-align: left;
    white-space: nowrap;
}

.report th {
    padding: 3px 0 2px;
    background-color: #ededed;
    text-align: center;
}

.report .alt {
    background-color: #f2f2f2;
}

.report .num,
.report .num td {
    text-align: right;
}

.report .mid,
.report .num .mid {
    text-align: center;
}

.report sub {
    font-size: 9px;
    line-height: 0;
}

.report small {
    font-size: 12px;
    font-weight: normal;
}

.c-244 { width: 244px; }
.c-108 { width: 108px; }
.c-114 { width: 114px; }
.c-124 { width: 124px; }
.c-52 { width: 52px; }
.c-58 { width: 58px; }
.c-74 { width: 74px; }
.c-84 { width: 84px; }
.c-102 { width: 102px; }
.c-89 { width: 89px; }
.c-98 { width: 98px; }
.c-126 { width: 126px; }
.c-49 { width: 49px; }
.c-90 { width: 90px; }
.c-94 { width: 94px; }
.c-66 { width: 66px; }
.c-150 { width: 150px; }
.c-140 { width: 140px; }
.c-100 { width: 100px; }
.c-80 { width: 80px; }
.c-70 { width: 70px; }
.c-60 { width: 60px; }
.c-50 { width: 50px; }

.vscroll {
    display: flex;
    flex-direction: column;
    width: 17px;
    padding: 14px 1px;
    background-color: #f0f0f0;
}

.vscroll button {
    height: 14px;
}

.vthumb {
    height: 107px;
    margin: 6px 0 auto;
    background-color: #cdcdcd;
}

/* details panel */
.highlight {
    width: 328px;
    margin: 6px 3px;
    padding: 3px 3px 8px;
    border: 4px solid #f00;
    border-radius: 8px;
}

.highlight p {
    display: flex;
    gap: 3px;
    margin-bottom: 7px;
}

.highlight h3 {
    margin-bottom: 4px;
}

.highlight .grid + h3 {
    margin-top: 4px;
}

.highlight .grid + .last {
    margin-top: 9px;
}

.grid {
    table-layout: fixed;
    width: 0;
    border-spacing: 0;
    border: 1px solid #868686;
    font-size: 12px;
}

.grid th,
.grid td {
    height: 25px;
    padding-left: 5px;
    overflow: hidden;
    text-align: left;
    font-weight: normal;
    white-space: nowrap;
    border-right: 1px solid #c4c4c4;
    border-bottom: 1px solid #c4c4c4;
}

.grid th {
    height: 27px;
    font-size: 11px;
    color: #fff;
    border-right: 1px solid #8a8a8a;
    border-bottom: 1px solid #555;
    background-image: linear-gradient(#6e6e6e, #4a4a4a 40%, #111 50%, #555);
}

.grid .st {
    padding-left: 18px;
}
```
